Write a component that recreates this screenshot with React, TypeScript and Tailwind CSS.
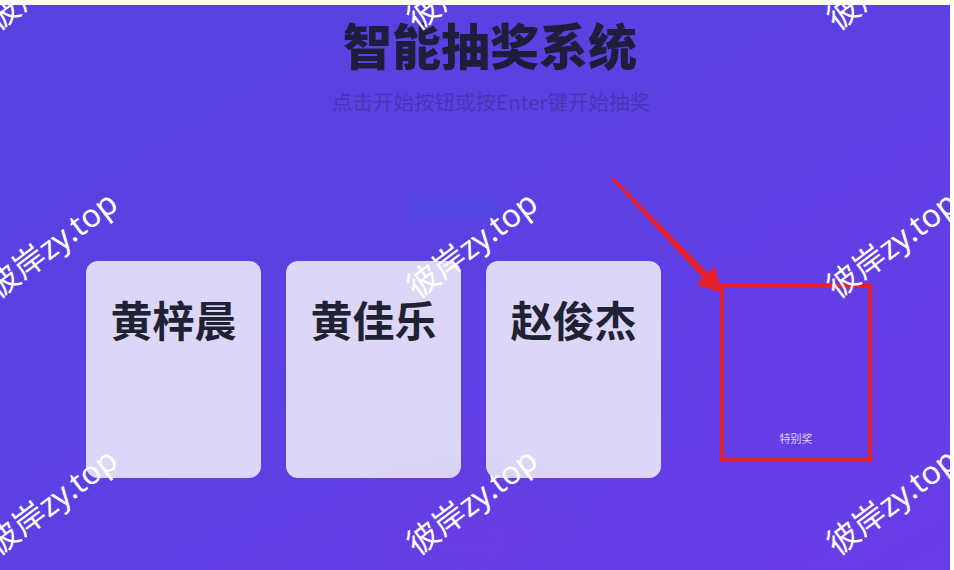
import React from "react";

const names = ["黄梓晨", "黄佳乐", "赵俊杰"];

// watermark anchors, top-left of the (unrotated) line box, in main coords
const marks = [
  "left-[0px] top-[-2px]",
  "left-[420px] top-[-2px]",
  "left-[840px] top-[-2px]",
  "left-[0px] top-[266px]",
  "left-[420px] top-[266px]",
  "left-[840px] top-[266px]",
  "left-[0px] top-[523px]",
  "left-[420px] top-[523px]",
  "left-[840px] top-[523px]",
];

const cjk = { fontFamily: '"Noto Sans CJK SC", "Noto Sans", sans-serif' };
const wm = { fontFamily: '"Noto Sans", "Noto Sans CJK SC", sans-serif' };

export default function App() {
  return (
    <div className="h-[570px] w-[954px] bg-white pt-[5px]" style={cjk}>
      <main className="relative flex h-[565px] w-[950px] flex-col items-center overflow-hidden bg-linear-to-br from-[#5741e0] via-[#5d40e3] to-[#693de7]">
        {/* Header */}
        <h1 className="pl-[30px] pt-[14px] text-[49px] font-black leading-none text-[#1f1d3c]">
          智能抽奖系统
        </h1>
        <p className="mt-[23px] pl-[32px] text-[20.5px] leading-none text-[#4636b6]">
          点击开始按钮或按Enter键开始抽奖
        </p>

        {/* faded start button */}
        <div className="mt-[84px] ml-[410px] h-[24px] w-[90px] self-start rounded-md bg-[#5048e2]/70 blur-[3px]" />

        {/* Cards */}
        <div className="mt-[41px] flex items-start gap-[25px] self-start pl-[86px]">
          {names.map((n) => (
            <div
              key={n}
              className="flex h-[217px] w-[175px] justify-center rounded-xl bg-[#dcd6f8] pt-[37px]"
            >
              <span className="text-[42px] font-bold leading-none text-[#1f2233]">{n}</span>
            </div>
          ))}

          <div className="relative ml-[38px] mt-[27px]">
            <div className="flex h-[170px] w-[144px] items-end justify-center bg-[#653de7] pb-[14px] shadow-[0_0_24px_8px_rgba(110,58,232,0.3)]">
              <span className="text-[11px] leading-none text-[#ddd0f8]">特别奖</span>
            </div>
            <div className="absolute -inset-[4px] border-4 border-[#e0222f]" />
          </div>
        </div>

        {/* faint glow under the cards */}
        <div className="mt-[30px] ml-[390px] h-[60px] w-[160px] self-start rounded-full bg-[#7a3ce9]/30 blur-xl" />

        {/* annotation arrow */}
        <svg
          className="pointer-events-none absolute left-0 top-0"
          width="950"
          height="565"
          viewBox="0 5 950 565"
        >
          <polygon
            fill="#e8202c"
            points="613.1,176.9 708.0,273.0 714.8,266.6 722,293 696.0,284.6 702.9,278.1 610.9,179.1"
          />
        </svg>

        {/* watermarks */}
        {marks.map((m) => (
          <span
            key={m}
            className={`pointer-events-none absolute ${m} origin-bottom-left -rotate-[37deg] whitespace-nowrap text-[32px] leading-none text-white`}
            style={wm}
          >
            彼岸zy.top
          </span>
        ))}
      </main>
    </div>
  );
}
